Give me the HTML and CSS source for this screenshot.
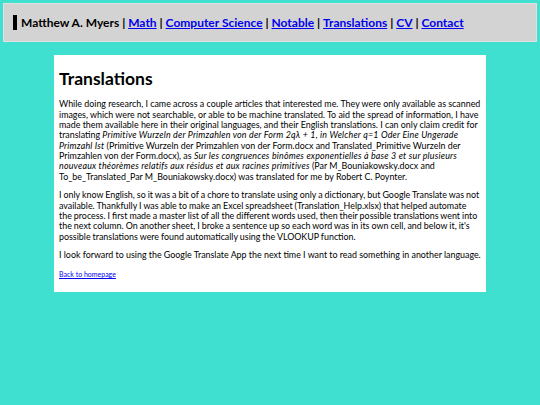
FILE: index.html
```html
<!DOCTYPE html>
<html>
<head>
<meta charset="utf-8">
<link rel="stylesheet" href="styles.css">
</head>
<body>
<header class="topbar">
  <span class="mark"></span>
  <span class="name">Matthew A. Myers</span> | <a href="#">Math</a> | <a href="#">Computer Science</a> | <a href="#">Notable</a> | <a href="#">Translations</a> | <a href="#">CV</a> | <a href="#">Contact</a>
</header>
<main class="card">
  <h1>Translations</h1>
  <p>While doing research, I came across a couple articles that interested me. They were only available as scanned images, which were not searchable, or able to be machine translated. To aid the spread of information, I have made them available here in their original languages, and their English translations. I can only claim credit for translating <em>Primitive Wurzeln der Primzahlen von der Form 2q&lambda; + 1, in Welcher q=1 Oder Eine Ungerade Primzahl Ist</em> (Primitive Wurzeln der Primzahlen von der Form.docx and Translated_Primitive Wurzeln der Primzahlen von der Form.docx), as <em>Sur les congruences binômes exponentielles à base 3 et sur plusieurs nouveaux théorèmes relatifs aux résidus et aux racines primitives</em> (Par M_Bouniakowsky.docx and To_be_Translated_Par M_Bouniakowsky.docx) was translated for me by Robert C. Poynter.</p>
  <p class="tight">I only know English, so it was a bit of a chore to translate using only a dictionary, but Google Translate was not available. Thankfully I was able to make an Excel spreadsheet (Translation_Help.xlsx) that helped automate the process. I first made a master list of all the different words used, then their possible translations went into the next column. On another sheet, I broke a sentence up so each word was in its own cell, and below it, it's possible translations were found automatically using the VLOOKUP function.</p>
  <p>I look forward to using the Google Translate App the next time I want to read something in another language.</p>
  <p class="back"><a href="#">Back to homepage</a></p>
</main>
</body>
</html>
```
FILE: styles.css
```css
html, body {
  margin: 0;
  padding: 0;
}
body {
  background: #40e0d0;
  font-family: Lato, "Noto Sans", sans-serif;
  color: #000;
  padding-top: 3px;
}
.topbar {
  margin: 0 3px;
  background: #d3d3d3;
  border: 1px solid #e0e0e0;
  height: 37px;
  display: flex;
  align-items: center;
  padding-left: 9px;
  font-size: 12px;
  font-weight: bold;
  white-space: pre;
}
.topbar a {
  color: #0000ee;
  text-decoration: underline;
}
.mark {
  display: inline-block;
  width: 4px;
  height: 15px;
  background: #000;
  margin-right: 4px;
}
.card {
  width: 80%;
  margin: 13px auto 0;
  background: #fff;
  padding: 5px 5px 13px 5px;
  box-sizing: border-box;
  font-size: 8.9px;
  line-height: 10.35px;
}
.card em {
  letter-spacing: 0.2px;
}
.card h1 {
  font-size: 17.5px;
  line-height: 24px;
  margin: 7px 0 8.3px;
}
.card p {
  margin: 0 0 8.3px;
}
.card p.tight {
  word-spacing: -0.25px;
}
.card p.back {
  margin: 0;
  font-size: 7px;
}
.back a {
  color: #0000ee;
}
```
